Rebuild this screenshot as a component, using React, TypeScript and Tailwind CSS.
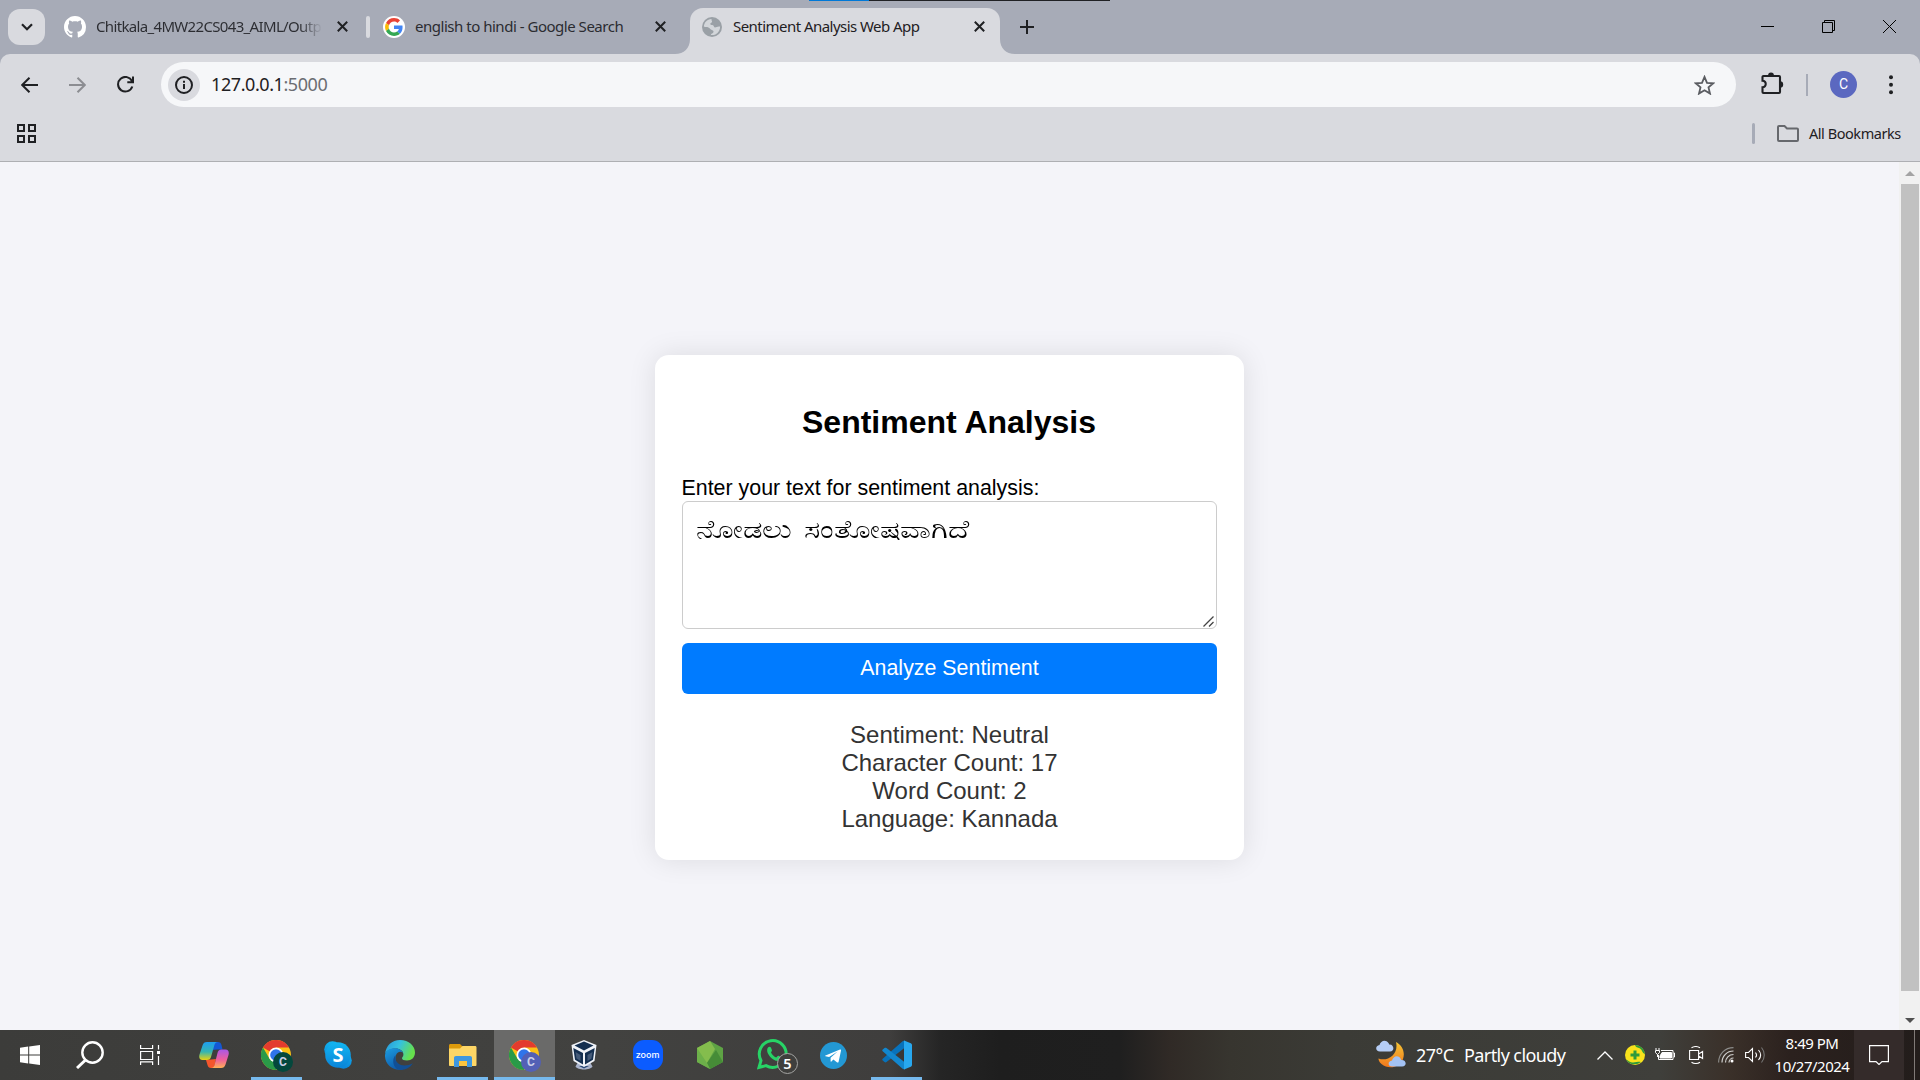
import React from "react";

type IconProps = { className?: string };

const CloseGlyph = ({ className }: IconProps) => (
  <svg viewBox="0 0 11 11" className={`h-[11px] w-[11px] shrink-0 ${className ?? ""}`} fill="none" stroke="#1f2023" strokeWidth="2">
    <path d="M.8.8l9.4 9.4M10.2.8L.8 10.2" />
  </svg>
);

const GitHubIcon = () => (
  <svg viewBox="0 0 16 16" className="h-[22px] w-[22px] shrink-0" fill="#fff">
    <path d="M8 0C3.58 0 0 3.58 0 8c0 3.54 2.29 6.53 5.47 7.59.4.07.55-.17.55-.38 0-.19-.01-.82-.01-1.49-2.01.37-2.53-.49-2.69-.94-.09-.23-.48-.94-.82-1.13-.28-.15-.68-.52-.01-.53.63-.01 1.08.58 1.23.82.72 1.21 1.87.87 2.33.66.07-.52.28-.87.51-1.07-1.78-.2-3.64-.89-3.64-3.95 0-.87.31-1.59.82-2.15-.08-.2-.36-1.02.08-2.12 0 0 .67-.21 2.2.82.64-.18 1.32-.27 2-.27s1.36.09 2 .27c1.53-1.04 2.2-.82 2.2-.82.44 1.1.16 1.92.08 2.12.51.56.82 1.27.82 2.15 0 3.07-1.87 3.75-3.65 3.95.29.25.54.73.54 1.48 0 1.07-.01 1.93-.01 2.2 0 .21.15.46.55.38A8.01 8.01 0 0016 8c0-4.42-3.58-8-8-8z" />
  </svg>
);

const GoogleIcon = () => (
  <svg viewBox="0 0 32 32" className="h-[22px] w-[22px] shrink-0">
    <circle cx="16" cy="16" r="16" fill="#fff" />
    <g transform="translate(3 3) scale(.542)">
      <path fill="#EA4335" d="M24 9.5c3.54 0 6.71 1.22 9.21 3.6l6.85-6.85C35.9 2.38 30.47 0 24 0 14.62 0 6.51 5.38 2.56 13.22l7.98 6.19C12.43 13.72 17.74 9.5 24 9.5z" />
      <path fill="#4285F4" d="M46.98 24.55c0-1.57-.15-3.09-.38-4.55H24v9.02h12.94c-.58 2.96-2.26 5.48-4.78 7.18l7.73 6c4.51-4.18 7.09-10.36 7.09-17.65z" />
      <path fill="#FBBC05" d="M10.53 28.59c-.48-1.45-.76-2.99-.76-4.59s.27-3.14.76-4.59l-7.98-6.19C.92 16.46 0 20.12 0 24s.92 7.54 2.56 10.78l7.97-6.19z" />
      <path fill="#34A853" d="M24 48c6.48 0 11.93-2.13 15.89-5.81l-7.73-6c-2.15 1.45-4.92 2.3-8.16 2.3-6.26 0-11.57-4.22-13.47-9.91l-7.98 6.19C6.51 42.62 14.62 48 24 48z" />
    </g>
  </svg>
);

const GlobeIcon = () => (
  <svg viewBox="0 0 20 20" className="h-5 w-5 shrink-0">
    <circle cx="10" cy="10" r="10" fill="#9aa0a6" />
    <path fill="#d3d6da" d="M9.6 1.9c-.6 1.5.8 1.7.4 3-.3 1-1.900.8-1.700 2.100.2 1.300 2 .7 3 1.500.9.7.4 1.700 1.500 1.900 1.400.2 2.500-1.300 5.300-.8.2 3.200-1.600 6.400-4.700 7.800-1.300.6-3.600.9-4.600.6.1-1.600 2.300-1.400 2.700-3 .4-1.700-1.300-1.800-2.600-2.600C7.700 11.600 7 10.300 5.300 10c-1.200-.2-2.300.1-3.400-.2C1.900 5.500 5 2.100 9.600 1.900z" />
  </svg>
);

const ChromeLogo = ({ badge, letter }: { badge: string; letter: string }) => (
  <svg viewBox="0 0 34 34" className="ml-[3px] mt-[3px] h-[34px] w-[34px]">
    <circle cx="15" cy="15" r="15" fill="#fbc116" />
    <path fill="#e33b2e" d="M15 15L2 7.500A15 15 0 0 1 28 7.500H15z" />
    <path fill="#2a9a48" d="M15 30A15 15 0 0 1 2 7.500L8.500 18.750 15 22.500 21.500 18.750z" />
    <circle cx="15" cy="15" r="7.500" fill="#fff" />
    <circle cx="15" cy="15" r="5.800" fill="#2f74ea" />
    <circle cx="22" cy="22" r="10" fill={badge} />
    <text x="22" y="26.300" textAnchor="middle" fontSize="12" fontWeight="700" fontFamily="Roboto, sans-serif" fill="#c9cfe8">{letter}</text>
  </svg>
);

const WindowsLogo = () => (
  <svg viewBox="0 0 20 20" className="h-5 w-5" fill="#fff">
    <path d="M0 2.800L8.200 1.600V9.500H0zM9.200 1.500L20 0v9.500H9.200zM0 10.500h8.200v7.900L0 17.200zM9.200 10.500H20V20L9.200 18.500z" />
  </svg>
);

const SearchIcon = () => (
  <svg viewBox="0 0 28 28" className="h-7 w-7" fill="none" stroke="#fff" strokeWidth="2.400">
    <circle cx="16.500" cy="11.500" r="10.200" />
    <path d="M9.500 19L1 27" strokeWidth="3" />
  </svg>
);

const TaskViewIcon = () => (
  <svg viewBox="0 0 20 20" className="h-5 w-5" fill="none" stroke="#fff" strokeWidth="1.200">
    <path d="M.6 0v3.500h12V0M.6 6.500h12v8H.6zM.6 20v-3.200h12V20M18.500 0v4.500M18.500 11v9" />
    <path d="M17 6h3v3h-3z" fill="#fff" stroke="none" />
  </svg>
);

const CopilotIcon = () => (
  <svg viewBox="0 0 30 28" className="h-7 w-[30px]">
    <defs>
      <linearGradient id="copA" x1="0" y1="0" x2="0" y2="1"><stop stopColor="#1e9df1" /><stop offset=".55" stopColor="#35b5b0" /><stop offset="1" stopColor="#ead20f" /></linearGradient>
      <linearGradient id="copB" x1="0" y1="0" x2="0" y2="1"><stop stopColor="#a857e8" /><stop offset=".55" stopColor="#ef5f9c" /><stop offset="1" stopColor="#ffb055" /></linearGradient>
    </defs>
    <path fill="#1358d6" d="M12 1h7c2 0 3 1 3.500 3l1 4.500H18L13 9z" />
    <path fill="#f4562c" d="M7 19l10-1-2 9h-3c-2 0-3-1-3.500-3z" />
    <path fill="url(#copA)" d="M8 1h11c-2 0-3 1-3.600 3L12 16c-.6 2-1.500 3-4 3H3.500C.5 19-.3 16.500.5 13.500l3-9C4.300 2 5.500 1 8 1z" />
    <path fill="url(#copB)" d="M22 27H12c2 0 3-1 3.500-3l3-12c.6-2 1.500-3.500 4-3.500h4C29.500 8.500 30.300 11 29.500 14l-3 9.500C25.700 26 24.500 27 22 27z" />
  </svg>
);

const SkypeIcon = () => (
  <svg viewBox="0 0 28 28" className="h-7 w-7">
    <defs><linearGradient id="sky" x1="0" y1="0" x2="0" y2="1"><stop stopColor="#12b6f2" /><stop offset="1" stopColor="#0a84d8" /></linearGradient></defs>
    <g fill="url(#sky)"><circle cx="8.500" cy="8.500" r="8.300" /><circle cx="19.500" cy="19.500" r="8.300" /><circle cx="14" cy="14" r="12.800" /></g>
    <text x="14" y="21" textAnchor="middle" fontSize="20" fontWeight="700" fontFamily="Noto Sans, sans-serif" fill="#fff">S</text>
  </svg>
);

const EdgeIcon = () => (
  <svg viewBox="0 0 30 30" className="h-[30px] w-[30px]">
    <defs>
      <linearGradient id="edA" x1="0" y1="0" x2="1" y2=".35"><stop stopColor="#2595dd" /><stop offset=".5" stopColor="#35c1df" /><stop offset="1" stopColor="#66e04c" /></linearGradient>
      <linearGradient id="edB" x1="0" y1="0" x2=".5" y2="1"><stop stopColor="#1b9de2" /><stop offset="1" stopColor="#0f5cab" /></linearGradient>
    </defs>
    <path fill="url(#edA)" d="M0 14C1 5.500 7 0 15 0c9 0 15 6 15 12.500 0 5-3.500 8-8 8-3 0-5-1-5-2.300 0-.9 1.400-1.400 1.400-3.700C18.400 11 15 8.500 10.500 8.500 5 8.500 1 11 0 14z" />
    <path fill="url(#edB)" d="M0 15c.6-4 4.500-6.700 9.500-6.700 4 0 7.500 2 8.600 4.500-1.500-1.300-3.600-1.300-5.100-.3-5 3.500-2.500 13.500 5 17-10 2-18.500-5-18-14.500z" />
    <path fill="#124f94" d="M10.500 15c-1.500 6.500 3.500 10.500 9 10.500 3 0 5.500-1 8.300-2.300-2.800 5-8.800 7.300-13.800 6.600-6-2-7.500-10-3.500-14.800z" />
  </svg>
);

const FolderIcon = () => (
  <svg viewBox="0 0 28 23" className="h-[23px] w-7">
    <path fill="#dd9a0b" d="M0 1.500C0 .6.500 0 1.500 0H11l2.500 2.500V8H0z" />
    <path fill="#fdd666" d="M0 4.500h11L13.500 2H26c1 0 1.500.5 1.500 1.500V21c0 .7-.5 1-1.200 1H1.200C.5 22 0 21.700 0 21z" />
    <path fill="#3f97df" d="M5 14c0-1.300.7-2 2-2h14c1.300 0 2 .7 2 2v9h-5v-6h-8v6H5z" />
    <path fill="#fcc43c" d="M10 17h8v5h-8z" />
  </svg>
);

const VirtualBoxIcon = () => (
  <svg viewBox="0 0 26 30" className="h-[30px] w-[26px]">
    <path fill="#aab4cc" d="M6.500 23h13l2 3.500c-2 4-15 4-17 0z" />
    <path fill="#2b4a78" d="M8 26h10l-5 2.500z" />
    <path fill="#f0f3f8" d="M13 0l12.500 5-2 16L13 27 2.500 21 .5 5z" />
    <path fill="#142f50" d="M13 1.500L22.500 5.500 13 10.500 3.500 5.500zM2.300 8L12 13v11.500l-8-4.700zM23.700 8L14 13v11.500l8-4.700z" />
    <path fill="#8d9cb5" d="M4.500 12l5 3v6l-4-2.500zM21.500 12l-5 3v6l4-2.500z" opacity=".4" />
  </svg>
);

const ZoomIcon = () => (
  <div className="flex h-[30px] w-[30px] items-center justify-center rounded-[11px] bg-[#0b5cff] pb-[2px] font-['Inter'] text-[9px] font-medium leading-none text-white">zoom</div>
);

const NodeIcon = () => (
  <svg viewBox="0 0 26 28" className="h-7 w-[26px]">
    <path fill="#5ea344" d="M13 0l13 7v14l-13 7L0 21V7z" />
    <path fill="#84bd4d" d="M13 0l5 8-8 14L0 21V7z" />
    <path fill="#468c37" d="M10 22l9-13 7 12-13 7z" />
    <path fill="#6db04a" d="M0 7l10 15 3 6L0 21z" />
  </svg>
);

const WhatsAppIcon = () => (
  <svg viewBox="0 0 42 36" className="mt-[4px] h-9 w-[42px]">
    <path fill="none" stroke="#27d366" strokeWidth="3" d="M2 28.500l2-7A13.400 13.400 0 1 1 9 26.600z" />
    <path fill="#27d366" d="M11 8.500c1-1.300 2.600-1 3 .2l1 2.500c.2.700-1 1.800-1 2.300 1.300 2.500 3 4 5.200 5 .8-.6 1.500-2 2.300-1.700l2.600 1.300c.7.500-.1 2.600-1.300 3.300-2.800 1.500-7-.8-9.500-3.500-2.500-2.800-4.300-6.800-2.300-9.400z" />
    <circle cx="30.500" cy="24.500" r="10" fill="#3f3f3d" stroke="#a5a5a3" />
    <text x="30.500" y="30" textAnchor="middle" fontSize="14.500" fontWeight="600" fontFamily="Noto Sans, sans-serif" fill="#fff">5</text>
  </svg>
);

const TelegramIcon = () => (
  <svg viewBox="0 0 27 27" className="h-[27px] w-[27px]">
    <circle cx="13.500" cy="13.500" r="13.500" fill="#2398d4" />
    <path fill="#fff" d="M5.500 13.500l14.500-6c.7-.2 1.200.2 1 1.200l-2.400 11c-.2.900-.7 1.100-1.400.7l-3.800-2.800-2 2c-.5.400-.8.300-.8-.5v-3.300l7-6.200-8.500 5.300-3.600-.7c-.6-.2-.6-.5 0-.7z" />
  </svg>
);

const VSCodeIcon = () => (
  <svg viewBox="0 0 30 30" className="h-[30px] w-[30px]">
    <path fill="#0872bb" d="M.7 20.500L2.500 22c.6.500 1.300.5 2 0L23 7.500V1c-1-.5-2-.3-2.700.5L.7 18.800c-.6.6-.6 1.200 0 1.700z" />
    <path fill="#1287cf" d="M.700 9.500L2.500 8c.6-.5 1.300-.5 2 0L23 22.500V29c-1 .5-2 .3-2.700-.5L.7 11.200c-.6-.6-.6-1.200 0-1.700z" />
    <path fill="#28a8ef" d="M22 .400L28.800 3.300c.8.400 1.200 1 1.200 1.800v19.800c0 .8-.4 1.400-1.200 1.800L22 29.600V.4z" />
  </svg>
);

const WeatherIcon = () => (
  <svg viewBox="0 0 30 28" className="-mt-[3px] h-7 w-[30px] shrink-0">
    <defs><linearGradient id="moon" x1="0" y1="0" x2="0" y2="1"><stop stopColor="#f5c433" /><stop offset="1" stopColor="#f0771d" /></linearGradient></defs>
    <path fill="url(#moon)" d="M20 2c6 3 9.500 10 7 17-3 8.500-14.500 11-21.500 5C3 22 2.500 20 2.500 18.500c9 3.500 20.500-4 17.500-16.500z" />
    <path fill="#b5cdf5" d="M4 11.500c-5 0-5-6-.5-6.500 1-4 6-6 9-2 .5.700.5 1 .7 1.500 5-.5 5.800 7 .8 7z" />
    <path fill="#a3c2f3" d="M16 26.500c-4.500 0-4.500-5.500 0-6 1-4 6-6 8.500-2 .5.500.5 1 .6 1.500 5.500-.5 6.300 6.500 1 6.500z" />
  </svg>
);

const BatteryIcon = () => (
  <svg viewBox="0 0 20 14" className="h-[14px] w-5" fill="none" stroke="#fff">
    <path d="M6 2.500h12v9H3.500V7M18.500 5h1v4h-1" />
    <path d="M7 4.500h9.500v5.500H5V8z" fill="#fff" />
    <path d="M1 0v2M4 0v2M.5 2.500h4v2l-2 2.200-2-2.200zM2.500 6.500V9" />
  </svg>
);

const MeetIcon = () => (
  <svg viewBox="0 0 16 18" className="h-[18px] w-4" fill="none" stroke="#fff" strokeWidth="1.100">
    <path d="M.6 4.500h9v9h-9zM9.600 8l4-2.500v7l-4-2.500M2.500 1.800C5 .3 8.500.3 11 1.800M2.500 16.200c2.500 1.500 6 1.500 8.500 0" />
  </svg>
);

const WifiIcon = () => (
  <svg viewBox="0 0 16 16" className="h-4 w-4" fill="none" strokeWidth="1.200">
    <path d="M.600 15.500C.6 7 7 .6 15.500.6" stroke="#8d8d8b" />
    <path d="M4 15.500C4 9 9 4 15.500 4M7.500 15.500c0-4.500 3.500-8 8-8M11 15.500c0-2.500 2-4.500 4.500-4.500" stroke="#d2d2d0" />
    <circle cx="14" cy="14" r="1.500" fill="#fff" />
  </svg>
);

const SpeakerIcon = () => (
  <svg viewBox="0 0 20 18" className="h-[18px] w-5" fill="none" stroke="#fff" strokeWidth="1.100">
    <path d="M.6 6.500h2.900L7.500 2.500v13l-4-4H.6z" />
    <path d="M10.500 6.500c1.300 1.500 1.300 3.500 0 5M13.500 4c2.600 3 2.600 7 0 10" />
    <path d="M16.500 1.500c3.700 4.500 3.700 10.500 0 15" stroke="#777" />
  </svg>
);

const TabStrip = () => (
  <div className="relative flex h-[54px] shrink-0 bg-[#a7abb7]">
    <div className="absolute left-[809px] top-0 h-px w-[60px] bg-[#0078d7]" />
    <div className="absolute left-[869px] top-0 h-px w-[241px] bg-[#202124]" />
    <button className="ml-2 mt-[9px] flex h-9 w-[37px] items-center justify-center rounded-xl bg-[#d9dadf]">
      <svg viewBox="0 0 12 8" className="h-2 w-3" fill="none" stroke="#1f2023" strokeWidth="2.200"><path d="M1 1.200l5 5 5-5" /></svg>
    </button>
    <div className="ml-[19px] flex h-[53px] w-[306px] items-center">
      <GitHubIcon />
      <span className="ml-[10px] w-[226px] whitespace-nowrap bg-[linear-gradient(90deg,#2b2c31_203px,transparent_226px)] bg-clip-text text-[15px] tracking-[-0.66px] text-transparent">Chitkala_4MW22CS043_AIML/Outp</span>
      <CloseGlyph className="ml-[15px]" />
      <span className="ml-[18px] h-[22px] w-1 rounded-full bg-[#d9dadf]" />
    </div>
    <div className="ml-[13px] flex h-[53px] w-[292px] items-center">
      <GoogleIcon />
      <span className="ml-[10px] w-60 whitespace-nowrap text-[15px] tracking-[-0.48px] text-[#2b2c31]">english to hindi - Google Search</span>
      <CloseGlyph />
    </div>
    <svg viewBox="0 0 15 15" className="h-[15px] w-[15px] shrink-0 self-end" fill="#d9dadf"><path d="M15 0v15H0C9 15 15 9 15 0z" /></svg>
    <div className="mt-2 flex h-[46px] w-[310px] items-center rounded-t-[13px] bg-[#d9dadf] pb-[9px] pl-3">
      <GlobeIcon />
      <span className="ml-[11px] w-[241px] whitespace-nowrap text-[15px] tracking-[-0.54px] text-[#1f2023]">Sentiment Analysis Web App</span>
      <CloseGlyph />
    </div>
    <svg viewBox="0 0 15 15" className="h-[15px] w-[15px] shrink-0 self-end" fill="#d9dadf"><path d="M0 0v15h15C6 15 0 9 0 0z" /></svg>
    <svg viewBox="0 0 14 14" className="ml-[5px] mt-5 h-[14px] w-[14px]" stroke="#1f2023" strokeWidth="2"><path d="M7 0v14M0 7h14" /></svg>
    <div className="ml-auto mr-6 flex h-[53px] items-center gap-12">
      <svg viewBox="0 0 13 13" className="h-[13px] w-[13px]" stroke="#000"><path d="M0 6.500h13" /></svg>
      <svg viewBox="0 0 13 13" className="h-[13px] w-[13px]" stroke="#000" fill="none"><path d="M.5 2.500h10v10H.5zM2.500 2.500v-2h10v10h-2" /></svg>
      <svg viewBox="0 0 13 13" className="h-[13px] w-[13px]" stroke="#000"><path d="M0 0l13 13M13 0L0 13" /></svg>
    </div>
  </div>
);

const Toolbar = () => (
  <div className="bg-[#a7abb7]">
    <div className="flex h-[61px] items-center rounded-t-[10px] bg-[#d9dadf] pl-[21px]">
      <svg viewBox="0 0 17 16" className="h-4 w-[17px]" fill="none" stroke="#1f2023" strokeWidth="2"><path d="M17 8H1.500M8.500.7L1.200 8l7.300 7.300" /></svg>
      <svg viewBox="0 0 17 16" className="ml-[31px] h-4 w-[17px]" fill="none" stroke="#8c8d92" strokeWidth="2"><path d="M0 8h15.500M8.500.7L15.800 8l-7.300 7.300" /></svg>
      <svg viewBox="0 0 17 17" className="ml-[31px] h-[17px] w-[17px]" fill="none" stroke="#1f2023" strokeWidth="2"><path d="M15.300 10.500A7.300 7.300 0 1 1 15 5.200M16 .5v5.700h-5.700" /></svg>
      <div className="ml-[27px] flex h-[45px] w-[1575px] items-center rounded-full bg-[#f6f7f9] pl-[7px] pr-[21px]">
        <div className="flex h-8 w-8 items-center justify-center rounded-full bg-[#d9dadf]">
          <svg viewBox="0 0 18 18" className="h-[18px] w-[18px]" fill="none" stroke="#1f2023" strokeWidth="2"><circle cx="9" cy="9" r="8" /><path d="M9 8v5M9 4.700v2" /></svg>
        </div>
        <span className="ml-[11px] flex-1 text-[18px] tracking-[-0.42px] text-[#1f2023]">127.0.0.1<span className="text-[#6b6d72]">:5000</span></span>
        <svg viewBox="0 0 21 20" className="h-5 w-[21px]" fill="none" stroke="#5a5c61" strokeWidth="1.800"><path d="M10.500 1.900l2.500 5.900 6.300.5-4.800 4.100 1.500 6.200-5.500-3.300L5 18.600l1.500-6.200L1.700 8.300l6.300-.5z" /></svg>
      </div>
      <svg viewBox="0 0 23 23" className="-mt-[2px] ml-[25px] h-[23px] w-[23px]"><path fill="none" stroke="#1f2023" strokeWidth="2.100" d="M2.500 4H18c.6 0 1 .4 1 1v15c0 .6-.4 1-1 1H2.500c-.6 0-1-.4-1-1v-4.700c4.300 0 4.300-6.600 0-6.600V5c0-.6.400-1 1-1z" /><path fill="#1f2023" d="M7 4a3 3.400 0 0 1 6 0zM19 9.300a3.200 3.200 0 0 1 0 6.400z" /></svg>
      <span className="ml-[22px] h-[22px] w-[2px] bg-[#a7abb7]" />
      <span className="ml-[22px] flex h-[27px] w-[27px] items-center justify-center rounded-full bg-[#5b68c0] font-['Roboto'] text-[14px] text-white">C</span>
      <svg viewBox="0 0 4 20" className="ml-8 h-5 w-1" fill="#1f2023"><circle cx="2" cy="2.200" r="2" /><circle cx="2" cy="9.700" r="2" /><circle cx="2" cy="17.200" r="2" /></svg>
    </div>
  </div>
);

const BookmarksBar = () => (
  <div className="flex h-[47px] shrink-0 items-center border-b border-[#aeafb3] bg-[#d9dadf] pb-[9px] pl-[17px]">
    <svg viewBox="0 0 19 19" className="h-[19px] w-[19px]" fill="none" stroke="#1f2023" strokeWidth="2"><path d="M1 1h6v6H1zM12 1h6v6h-6zM1 12h6v6H1zM12 12h6v6h-6z" /></svg>
    <span className="ml-auto h-[21px] w-[3px] rounded-full bg-[#a7abb7]" />
    <svg viewBox="0 0 22 17" className="ml-[22px] h-[17px] w-[22px]" fill="none" stroke="#66686d" strokeWidth="2"><path d="M2 1h5.500L10 3.500h10c.6 0 1 .4 1 1V15c0 .6-.4 1-1 1H2c-.6 0-1-.4-1-1V2c0-.6.400-1 1-1z" /></svg>
    <span className="ml-[10px] mr-[18px] w-[93px] whitespace-nowrap text-[14.500px] tracking-[-0.45px] text-[#1f2023]">All Bookmarks</span>
  </div>
);

const SentimentCard = () => (
  <div className="mr-px mt-[23px] flex h-[505px] w-[589px] flex-col rounded-[14px] bg-white px-[27px] font-['Liberation_Sans',sans-serif] text-black shadow-[0_0_28px_rgba(0,0,0,0.1)]">
    <h2 className="mt-[49px] text-center text-[32px] font-bold leading-[37px]">Sentiment Analysis</h2>
    <label className="mt-[35px] text-[21.400px] leading-[25px]">Enter your text for sentiment analysis:</label>
    <div
      role="textbox"
      className="relative h-[128px] w-full rounded-[6px] border border-[#ccc] bg-white px-[13px] py-[14px] font-['Liberation_Mono',monospace] text-[24.500px] leading-[32px]"
    >
      <span className="inline-block origin-left scale-x-[1.23] whitespace-nowrap [word-spacing:-4.500px]">ನೋಡಲು ಸಂತೋಷವಾಗಿದೆ</span>
      <svg viewBox="0 0 11 11" className="absolute bottom-px right-[2px] h-[11px] w-[11px]" stroke="#444" strokeWidth="1.300"><path d="M.5 10.500l10-10M6 10.500L10.500 6" /></svg>
    </div>
    <button className="mt-[14px] h-[51px] rounded-[6px] bg-[#007bff] pl-px text-[21.400px] leading-none text-white">Analyze Sentiment</button>
    <div className="mt-[27px] pl-px text-center text-[24px] leading-7 text-[#333]">
      <p>Sentiment: Neutral</p>
      <p>Character Count: 17</p>
      <p>Word Count: 2</p>
      <p>Language: Kannada</p>
    </div>
  </div>
);

const Scrollbar = () => (
  <div className="flex w-[21px] flex-col items-center bg-[#f1f1f1]">
    <svg viewBox="0 0 10 5" className="mt-[9px] h-[5px] w-[10px]" fill="#a3a3a3"><path d="M0 5L5 0l5 5z" /></svg>
    <div className="mt-2 h-[807px] w-[18px] bg-[#c1c1c1]" />
    <svg viewBox="0 0 10 5" className="mt-[27px] h-[5px] w-[10px]" fill="#505050"><path d="M0 0h10L5 5z" /></svg>
  </div>
);

const AppSlot = ({ children, open, active, className }: { children: React.ReactNode; open?: boolean; active?: boolean; className?: string }) => (
  <div className={`relative flex h-[50px] w-[61px] shrink-0 items-center justify-center ${active ? "bg-[#6a6a69]" : ""} ${className ?? ""}`}>
    {children}
    {open && <span className={`absolute bottom-0 h-[3px] bg-[#76b9ed] ${active ? "w-[61px]" : "w-[51px]"}`} />}
  </div>
);

const Taskbar = () => (
  <div className="flex h-[50px] shrink-0 items-center bg-[linear-gradient(90deg,#3c3c3a_0px,#424240_600px,#3f3e3d_890px,#252525_940px,#1e1e1e_1000px,#1f1f1f_1120px,#302a26_1170px,#37352f_1230px,#3b3b36_1340px,#3f3f3b_1660px,#3a3029_1730px,#2b211e_1790px,#231d1b_1920px)] text-white">
    <AppSlot className="-ml-px"><WindowsLogo /></AppSlot>
    <AppSlot className="-ml-px"><SearchIcon /></AppSlot>
    <AppSlot className="-ml-px"><TaskViewIcon /></AppSlot>
    <AppSlot className="ml-[3px]"><CopilotIcon /></AppSlot>
    <AppSlot open className="ml-[2px]"><ChromeLogo badge="#04483d" letter="C" /></AppSlot>
    <AppSlot><SkypeIcon /></AppSlot>
    <AppSlot className="ml-px"><EdgeIcon /></AppSlot>
    <AppSlot open className="ml-[2px]"><FolderIcon /></AppSlot>
    <AppSlot open active className="ml-px"><ChromeLogo badge="#5360b5" letter="C" /></AppSlot>
    <AppSlot className="-ml-[2px]"><VirtualBoxIcon /></AppSlot>
    <AppSlot className="ml-[3px]"><ZoomIcon /></AppSlot>
    <AppSlot className="ml-px"><NodeIcon /></AppSlot>
    <AppSlot className="ml-[7px]"><WhatsAppIcon /></AppSlot>
    <AppSlot className="-ml-[5px]"><TelegramIcon /></AppSlot>
    <AppSlot open className="ml-[2px]"><VSCodeIcon /></AppSlot>
    <div className="ml-auto flex h-full w-[544px] items-center">
      <WeatherIcon />
      <span className="ml-[10px] w-12 whitespace-nowrap text-[18px] tracking-[-0.5px]">27°C</span>
      <span className="w-[133px] whitespace-nowrap text-[18px] tracking-[-0.58px]">Partly cloudy</span>
      <svg viewBox="0 0 16 9" className="h-[9px] w-4" fill="none" stroke="#fff" strokeWidth="1.300"><path d="M.5 8.500L8 1l7.500 7.500" /></svg>
      <svg viewBox="0 0 20 20" className="ml-3 h-5 w-5"><circle cx="10" cy="10" r="10" fill="#f9e21c" /><path fill="#2e9a3c" d="M10 0a10 10 0 0 1 10 9c-3-1-2.500-4-5-5.500S11 3 10 0zM1 14.500c2 .5 3.500 3 6 3s5-1.500 9-.5A10 10 0 0 1 1 14.500zM8.500 5.500h3v3h3v3h-3v3h-3v-3h-3v-3h3z" /></svg>
      <span className="ml-[10px]"><BatteryIcon /></span>
      <span className="ml-[14px]"><MeetIcon /></span>
      <span className="ml-[13px]"><WifiIcon /></span>
      <span className="ml-[11px]"><SpeakerIcon /></span>
      <div className="ml-[9px] w-[76px] whitespace-nowrap text-center text-[15px] leading-[23px] tracking-[-0.5px]">
        <div>8:49 PM</div>
        <div>10/27/2024</div>
      </div>
      <div className="ml-[4px] flex h-full w-[50px] items-center justify-center bg-[#342b2a]">
        <svg viewBox="0 0 20 20" className="h-5 w-5" fill="none" stroke="#fff" strokeWidth="1.200"><path d="M.6.600h18.800v16H13L10 19.500 7 16.600H.6z" /></svg>
      </div>
      <span className="ml-[10px] h-full w-px bg-[#807a77]" />
    </div>
  </div>
);

export default function App() {
  return (
    <div className="flex h-[1080px] w-[1920px] flex-col overflow-hidden font-['Noto_Sans',sans-serif]">
      <TabStrip />
      <Toolbar />
      <BookmarksBar />
      <div className="flex min-h-0 flex-1">
        <main className="flex flex-1 items-center justify-center bg-[#f4f4f9]">
          <SentimentCard />
        </main>
        <Scrollbar />
      </div>
      <Taskbar />
    </div>
  );
}
